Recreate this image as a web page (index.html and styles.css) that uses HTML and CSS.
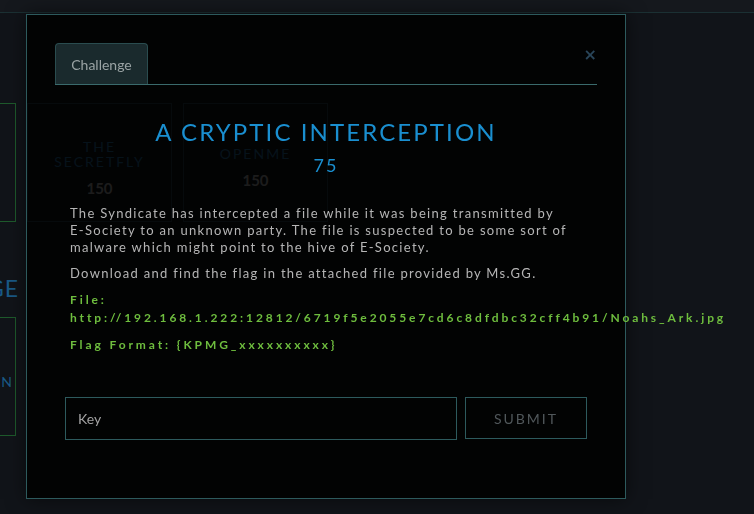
FILE: index.html
```html
<!DOCTYPE html>
<html lang="en">
<head>
<meta charset="utf-8">
<title>Challenge</title>
<link rel="stylesheet" href="styles.css">
</head>
<body>
<nav class="navbar"></nav>
<main class="board">
  <section class="category">
    <div class="card-row">
      <div class="card solved"><div class="card-name">WARMUP</div><div class="card-value">100</div></div>
      <div class="card"><div class="card-name">THE<br>SECRETFLY</div><div class="card-value">150</div></div>
      <div class="card"><div class="card-name">OPENME</div><div class="card-value">150</div></div>
    </div>
  </section>
  <section class="category">
    <h2 class="cat-title">FORENSIC CHALLENGE</h2>
    <div class="card-row">
      <div class="card solved"><div class="card-name">CONFIGURATION</div></div>
    </div>
  </section>
</main>

<div class="modal">
  <div class="modal-head">
    <div class="tab">Challenge</div>
    <button class="close" type="button">&times;</button>
  </div>
  <h1 class="title">A CRYPTIC INTERCEPTION</h1>
  <div class="points">75</div>
  <div class="desc">
    <p>The Syndicate has intercepted a file while it was being transmitted by E-Society to an unknown party. The file is suspected to be some sort of malware which might point to the hive of E-Society.</p>
    <p>Download and find the flag in the attached file provided by Ms.GG.</p>
    <p class="green">File:<br>http://192.168.1.222:12812/6719f5e2055e7cd6c8dfdbc32cff4b91/Noahs_Ark.jpg</p>
    <p class="green">Flag Format: {KPMG_xxxxxxxxxx}</p>
  </div>
  <form class="key-form">
    <input class="key-input" type="text" placeholder="Key">
    <button class="submit" type="button">SUBMIT</button>
  </form>
</div>
</body>
</html>
```
FILE: styles.css
```css
* { box-sizing: border-box; }
html, body { margin: 0; padding: 0; }
body {
  background: #111419;
  font-family: Lato, "Open Sans", sans-serif;
  width: 754px;
  height: 514px;
  overflow: hidden;
}
.navbar {
  height: 13px;
  background: #15181d;
  border-bottom: 1px solid #1b3033;
}
.board {
  margin-left: -129px;
  padding-top: 90px;
}
.card-row {
  display: flex;
  gap: 11px;
}
.card {
  width: 145px;
  height: 119px;
  border: 1px solid #2a4850;
  padding-top: 10px;
  display: flex;
  flex-direction: column;
  align-items: center;
  justify-content: center;
  text-align: center;
}
.card.solved { border-color: #1e5a2c; }
.card-name {
  color: #2a78ad;
  font-size: 14px;
  line-height: 15px;
  letter-spacing: 2px;
  white-space: nowrap;
}
.card.solved .card-name { color: #1a5a86; }
.card-value {
  color: #bcbcbc;
  font-weight: 700;
  font-size: 15px;
  margin-top: 10px;
}
.cat-title {
  margin: 51px 0 14px 0;
  width: 148px;
  text-align: right;
  white-space: nowrap;
  direction: rtl;
  overflow: hidden;
  color: #1a5a86;
  font-weight: 400;
  font-size: 23px;
  line-height: 30px;
  letter-spacing: 1px;
}
.modal {
  position: fixed;
  left: 26px;
  top: 14px;
  width: 600px;
  height: 485px;
  background: rgba(0, 0, 0, 0.85);
  border: 1px solid #2d5a5d;
  box-shadow: 0 0 18px rgba(0, 0, 0, 0.55);
  padding: 28px 28px 0 28px;
}
.modal-head {
  display: flex;
  align-items: flex-start;
  border-bottom: 1px solid #3a6a6c;
}
.tab {
  width: 93px;
  height: 41px;
  background: #1a2a2d;
  border: 1px solid #2a4c4f;
  border-bottom: none;
  border-radius: 4px 4px 0 0;
  color: #9aa3a4;
  font-size: 14px;
  display: flex;
  align-items: center;
  justify-content: center;
}
.close {
  margin-left: auto;
  margin-right: 0;
  margin-top: 4px;
  background: none;
  border: none;
  padding: 0;
  color: #294559;
  font-family: "DejaVu Sans", sans-serif;
  font-weight: 700;
  font-size: 16px;
  line-height: 16px;
}
.title {
  margin: 32px 0 0 0;
  text-align: center;
  color: #1a8fd0;
  font-weight: 400;
  font-size: 24px;
  line-height: 30px;
  letter-spacing: 2.1px;
}
.points {
  margin-top: 7px;
  text-align: center;
  color: #1a8fd0;
  font-size: 18px;
  line-height: 22px;
  letter-spacing: 2px;
}
.desc {
  padding: 0 30px 0 15px;
  margin-top: 29px;
  color: #b5b5b5;
  font-size: 13px;
  line-height: 17px;
  letter-spacing: 1.3px;
}
.desc p { margin: 0 0 9px 0; }
.desc .green {
  color: #6ebd3e;
  font-weight: 700;
  font-size: 12px;
  line-height: 18px;
  letter-spacing: 2.9px;
  white-space: nowrap;
}
.key-form {
  display: flex;
  gap: 8px;
  margin: 43px 10px 0 10px;
}
.key-input {
  width: 392px;
  height: 43px;
  background: transparent;
  border: 1px solid #2d5a5d;
  color: #a0a0a0;
  font-family: Lato, sans-serif;
  font-size: 14px;
  padding: 0 12px;
  outline: none;
}
.key-input::placeholder { color: #a2a2a2; }
.submit {
  width: 122px;
  height: 42px;
  background: transparent;
  border: 1px solid #2d5a5d;
  color: #50575a;
  font-family: Lato, sans-serif;
  font-size: 14px;
  letter-spacing: 2px;
}
```
